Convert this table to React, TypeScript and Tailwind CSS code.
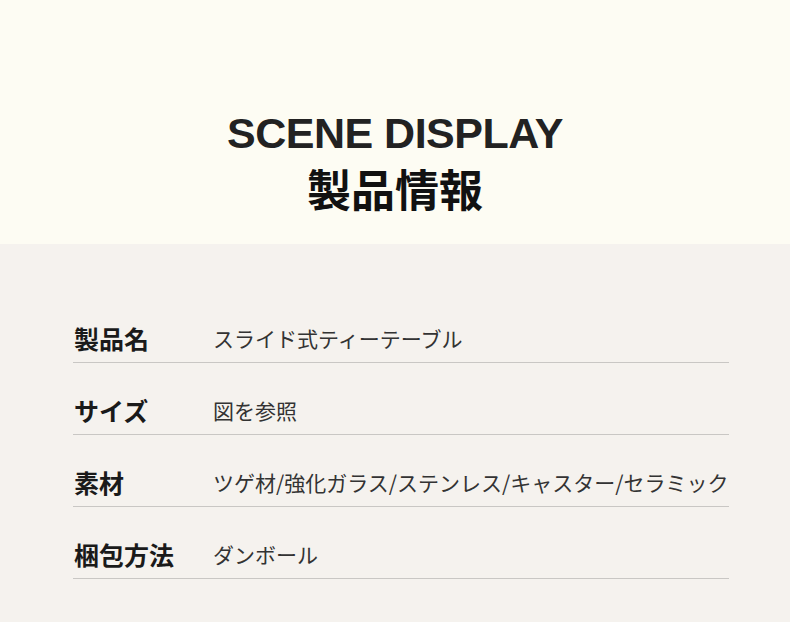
import React from "react";

const rows = [
  { label: "製品名", value: "スライド式ティーテーブル" },
  { label: "サイズ", value: "図を参照" },
  { label: "素材", value: "ツゲ材/強化ガラス/ステンレス/キャスター/セラミック" },
  { label: "梱包方法", value: "ダンボール" },
];

export default function App() {
  return (
    <div className="w-[790px] h-[622px] overflow-hidden flex flex-col">
      <div className="h-[244px] bg-[#fdfcf3] flex flex-col items-center pt-[108px]">
        <div className="text-[43px] leading-[50px] font-bold tracking-[-0.5px] text-[#222222] [font-family:'Liberation_Sans',Arial,sans-serif]">
          SCENE DISPLAY
        </div>
        <div className="mt-[3px] text-[44px] leading-[54px] font-bold text-[#111111] [font-family:'Noto_Sans_CJK_JP',sans-serif]">
          製品情報
        </div>
      </div>
      <div className="flex-1 bg-[#f5f2ee] pt-[74px]">
        <div className="ml-[73px] w-[656px] flex flex-col gap-[27px]">
          {rows.map((r) => (
            <div
              key={r.label}
              className="h-[45px] pb-[4px] flex items-center border-b border-[#c9c7c4]"
            >
              <div className="w-[140px] pl-[1px] text-[25px] font-bold text-[#1a1a1a] [font-family:'Noto_Sans_CJK_JP',sans-serif] leading-none">
                {r.label}
              </div>
              <div className="text-[21px] text-[#333333] whitespace-nowrap [font-family:'Noto_Sans_CJK_JP',sans-serif] leading-none">
                {r.value}
              </div>
            </div>
          ))}
        </div>
      </div>
    </div>
  );
}
